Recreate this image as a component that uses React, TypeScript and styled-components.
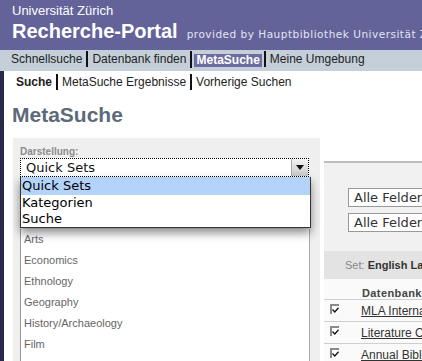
import React from "react";
import styled, { createGlobalStyle } from "styled-components";

const GlobalStyle = createGlobalStyle`
  html, body {
    margin: 0;
    padding: 0;
    background: #ffffff;
    overflow: hidden;
  }
  body {
    font-family: "Liberation Sans", Arial, sans-serif;
  }
`;

const Header = styled.div`
  height: 50px;
  box-sizing: border-box;
  padding: 3px 0 0 12px;
  background-color: #63639a;
  color: #ffffff;
  white-space: nowrap;
  overflow: hidden;
`;

const University = styled.div`
  font-size: 13px;
  line-height: 16px;
`;

const TitleRow = styled.div`
  display: flex;
  align-items: baseline;
  gap: 9px;
  line-height: 24px;
`;

const Title = styled.span`
  font-size: 20px;
  font-weight: bold;
`;

const Provided = styled.span`
  font-family: "DejaVu Sans", Verdana, sans-serif;
  font-size: 10.5px;
  letter-spacing: 0.5px;
  color: #e4e4f0;
`;

const Nav = styled.div`
  height: 21px;
  box-sizing: border-box;
  padding: 1px 0 0 7px;
  display: flex;
  align-items: flex-start;
  background-color: #c5cfd9;
  white-space: nowrap;
`;

const SubNav = styled.div`
  height: 21px;
  box-sizing: border-box;
  padding: 3px 0 0 8px;
  display: flex;
  align-items: flex-start;
  white-space: nowrap;
`;

const NavItem = styled.span<{ $active?: boolean; $first?: boolean }>`
  font-size: 12px;
  line-height: 16px;
  padding: ${(p) => (p.$active ? "0 2px" : "0 4px")};
  color: #222;
  border-left: ${(p) => (p.$first ? "none" : "2px solid #111")};
`;

const Highlight = styled.span`
  display: inline-block;
  margin-top: 3px;
  padding: 0 2px;
  line-height: 13px;
  font-weight: bold;
  color: #ffffff;
  background-color: #6c6ca0;
`;

const SubItem = styled.span<{ $bold?: boolean; $first?: boolean }>`
  font-size: 12px;
  line-height: 16px;
  padding: 0 4px;
  color: #222;
  font-weight: ${(p) => (p.$bold ? "bold" : "normal")};
  border-left: ${(p) => (p.$first ? "none" : "2px solid #111")};
`;

const Body = styled.div`
  border-left: 4px solid #29294a;
  min-height: 320px;
`;

const Heading = styled.h1`
  margin: 11px 0 0 8px;
  font-size: 21px;
  line-height: 24px;
  font-weight: bold;
  color: #5d6a79;
`;

const Content = styled.div`
  display: flex;
  align-items: flex-start;
  margin-top: 11px;
  padding-left: 9px;
  gap: 4px;
`;

const LeftPanel = styled.div`
  width: 307px;
  height: 240px;
  flex-shrink: 0;
  box-sizing: border-box;
  padding: 8px 0 0 7px;
  background-color: #efefef;
`;

const Label = styled.div`
  font-size: 10px;
  line-height: 12px;
  font-weight: bold;
  color: #8c8c8c;
`;

const SelectWrap = styled.div`
  position: relative;
  width: 289px;
`;

const SelectBox = styled.div`
  height: 19px;
  box-sizing: border-box;
  display: flex;
  align-items: center;
  background: #ffffff;
  border: 1px dotted #000;
  font-family: "DejaVu Sans", "Lucida Grande", sans-serif;
  font-size: 13px;
  color: #111;
`;

const SelectText = styled.span`
  flex: 1;
  padding-left: 5px;
`;

const ArrowButton = styled.span`
  width: 16px;
  height: 17px;
  display: flex;
  align-items: center;
  justify-content: center;
  background: linear-gradient(#f4f4f4, #c8c8c8);
  border-left: 1px solid #aaa;
`;

const Popup = styled.div`
  position: absolute;
  top: 19px;
  left: 0;
  width: 291px;
  box-sizing: border-box;
  background: #ffffff;
  border: 1px solid #333;
  border-top: none;
  box-shadow: 0 5px 9px rgba(0, 0, 0, 0.45);
  font-family: "DejaVu Sans", "Lucida Grande", sans-serif;
  font-size: 13px;
  color: #000;
  z-index: 2;
`;

const Option = styled.div<{ $selected?: boolean }>`
  height: 16px;
  line-height: 16px;
  padding-left: 1px;
  background-color: ${(p) => (p.$selected ? "#b4d3fb" : "transparent")};
  &:first-child {
    height: 18px;
    line-height: 18px;
  }
`;

const ListBox = styled.div`
  margin-top: 52px;
  width: 290px;
  height: 140px;
  box-sizing: border-box;
  background: #ffffff;
  border-left: 1px solid #999;
  border-right: 1px solid #aaa;
`;

const ListItem = styled.div`
  height: 21px;
  line-height: 21px;
  padding-left: 3px;
  font-size: 11px;
  color: #666;
`;

const RightPanel = styled.div`
  flex: 1;
  margin-top: 23px;
  min-width: 0;
  overflow: hidden;
  border-top: 2px solid #bcbcbc;
  background-color: #f1f1f1;
  white-space: nowrap;
`;

const Inputs = styled.div`
  display: flex;
  flex-direction: column;
  gap: 6px;
  padding: 25px 0 0 24px;
  height: 88px;
  box-sizing: border-box;
`;

const FieldInput = styled.div`
  height: 19px;
  width: 140px;
  box-sizing: border-box;
  padding-left: 5px;
  line-height: 17px;
  background: #ffffff;
  border: 1px solid #999;
  font-family: "DejaVu Sans", "Lucida Grande", sans-serif;
  font-size: 13px;
  color: #333;
`;

const SetBand = styled.div`
  height: 28px;
  line-height: 28px;
  padding-left: 21px;
  background-color: #e3e3e3;
  font-size: 11px;
  color: #888;
`;

const SetName = styled.b`
  color: #333;
`;

const Table = styled.div`
  background-color: #fafafa;
  padding-top: 8px;
`;

const ColHead = styled.div`
  padding-left: 38px;
  height: 12px;
  line-height: 12px;
  font-size: 11px;
  font-weight: bold;
  color: #444;
  letter-spacing: 0.4px;
`;

const Row = styled.div`
  display: flex;
  align-items: center;
  height: 21px;
  border-top: 1px solid #cfcfcf;
  padding-left: 6px;
  gap: 22px;
`;

const Check = styled.span`
  width: 10px;
  height: 10px;
  box-sizing: border-box;
  border-top: 2px solid #8a8a8a;
  border-left: 2px solid #8a8a8a;
  background: #ffffff;
  display: flex;
  align-items: center;
  justify-content: center;
  margin-top: -3px;
`;

const DbLink = styled.a`
  font-size: 12px;
  color: #333;
  text-decoration: underline;
`;

const categories = [
  "Arts",
  "Economics",
  "Ethnology",
  "Geography",
  "History/Archaeology",
  "Film",
];

const databases = [
  "MLA International Bibliography",
  "Literature Online",
  "Annual Bibliography of English Language and Literature",
];

function CheckMark() {
  return (
    <svg width="7" height="6" viewBox="0 0 7 6">
      <path d="M0.5 2.5 L2.8 5 L6.5 0.8" fill="none" stroke="#111" strokeWidth="1.3" />
    </svg>
  );
}

export default function App() {
  return (
    <>
      <GlobalStyle />
      <Header>
        <University>Universität Zürich</University>
        <TitleRow>
          <Title>Recherche-Portal</Title>
          <Provided>provided by Hauptbibliothek Universität Zürich</Provided>
        </TitleRow>
      </Header>
      <Nav>
        <NavItem $first>Schnellsuche</NavItem>
        <NavItem>Datenbank finden</NavItem>
        <NavItem $active>
          <Highlight>MetaSuche</Highlight>
        </NavItem>
        <NavItem>Meine Umgebung</NavItem>
      </Nav>
      <Body>
        <SubNav>
          <SubItem $first $bold>
            Suche
          </SubItem>
          <SubItem>MetaSuche Ergebnisse</SubItem>
          <SubItem>Vorherige Suchen</SubItem>
        </SubNav>
        <Heading>MetaSuche</Heading>
        <Content>
          <LeftPanel>
            <Label>Darstellung:</Label>
            <SelectWrap>
              <SelectBox>
                <SelectText>Quick Sets</SelectText>
                <ArrowButton>
                  <svg width="8" height="5" viewBox="0 0 8 5">
                    <path d="M0 0 H8 L4 5 Z" fill="#111" />
                  </svg>
                </ArrowButton>
              </SelectBox>
              <Popup>
                <Option $selected>Quick Sets</Option>
                <Option>Kategorien</Option>
                <Option>Suche</Option>
              </Popup>
              <ListBox>
                {categories.map((c) => (
                  <ListItem key={c}>{c}</ListItem>
                ))}
              </ListBox>
            </SelectWrap>
          </LeftPanel>
          <RightPanel>
            <Inputs>
              <FieldInput>Alle Felder</FieldInput>
              <FieldInput>Alle Felder</FieldInput>
            </Inputs>
            <SetBand>
              Set: <SetName>English Language and Literature</SetName>
            </SetBand>
            <Table>
              <ColHead>Datenbankname</ColHead>
              {databases.map((d) => (
                <Row key={d}>
                  <Check>
                    <CheckMark />
                  </Check>
                  <DbLink>{d}</DbLink>
                </Row>
              ))}
            </Table>
          </RightPanel>
        </Content>
      </Body>
    </>
  );
}
